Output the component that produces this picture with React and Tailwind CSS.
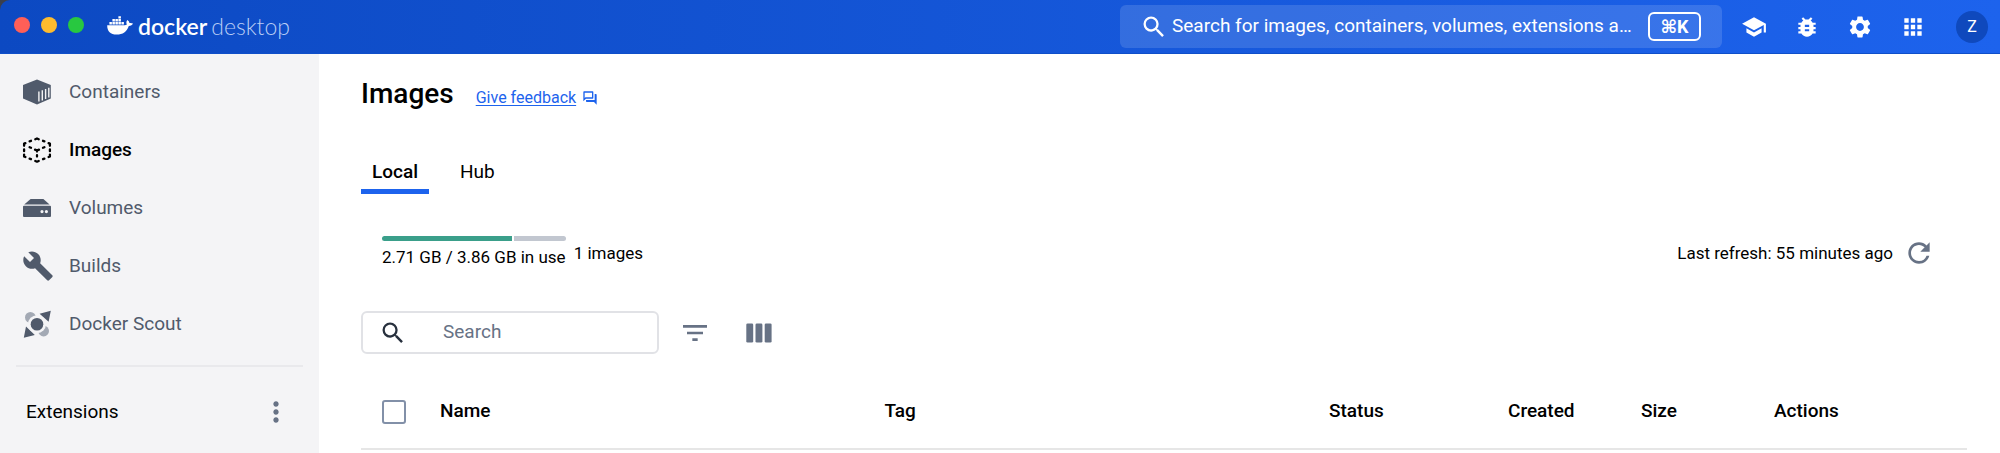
import React from "react";
import {
  MdApps,
  MdBugReport,
  MdBuild,
  MdFilterList,
  MdMoreVert,
  MdOutlineForum,
  MdRefresh,
  MdSchool,
  MdSearch,
  MdSettings,
} from "react-icons/md";

function WhaleIcon() {
  return (
    <svg viewBox="0 0 26 19" className="h-[19px] w-[26px]" fill="currentColor" aria-hidden="true">
      <path d="M0.2 9.2H17.6C18.5 9.2 19.3 9 19.9 8.6C19.1 7.2 19.2 5.4 20.4 4.1C21.6 4.9 22.3 5.9 22.4 7C23.6 6.8 25 6.9 26 7.6C25.4 9.2 23.8 9.9 21.8 9.9C19.8 15.4 15.9 18.6 9.6 18.6C3.6 18.6 0.1 15.4 0.2 9.2Z" />
      <path d="M2.4 6.1h2.5v2.5H2.4zM5.4 6.1h2.5v2.5H5.4zM8.4 6.1h2.5v2.5H8.4zM11.4 6.1h2.5v2.5h-2.5zM14.4 6.1h2.5v2.5h-2.5zM5.4 3.1h2.5v2.5H5.4zM8.4 3.1h2.5v2.5H8.4zM11.4 3.1h2.5v2.5h-2.5zM11.4 0.2h2.5v2.4h-2.5z" />
    </svg>
  );
}

function ContainersIcon() {
  return (
    <svg viewBox="0 0 30 26" className="h-[26px] w-[30px]" aria-hidden="true">
      <path d="M15 0.5L28.8 6V19.6L15 25.5L1 19.6V6Z" fill="currentColor" />
      <path
        d="M16.9 12.4V22.6M20.3 11.2V21.4M23.6 10V20M26.8 8.8V18.6"
        stroke="#f4f4f6"
        strokeWidth="1.4"
      />
    </svg>
  );
}

function ImagesIcon() {
  return (
    <svg
      viewBox="0 0 30 26"
      className="h-[26px] w-[30px]"
      fill="none"
      stroke="currentColor"
      strokeWidth="2.3"
      strokeLinecap="round"
      strokeLinejoin="round"
      aria-hidden="true"
    >
      <path d="M13.3 2.2L15 1.5L16.7 2.2M7.6 4.3L9 3.8M21 3.8L22.4 4.3" />
      <path d="M2.1 8.8V6.6L3.4 6.1M26.6 6.1L27.9 6.6V8.8M2.1 12.4V14.2M27.9 12.4V14.2" />
      <path d="M2.1 17.6V19.4L3.4 20M26.6 20L27.9 19.4V17.6M7.6 21.7L9 22.2M21 22.2L22.4 21.7M13.3 24L15 24.7L16.7 24" />
      <path d="M7.6 10.2L9 10.8M21 10.8L22.4 10.2M13 12.6L15 13.5L17 12.6M15 13.5V14.6M15 18.2V19.6" />
    </svg>
  );
}

function VolumesIcon() {
  return (
    <svg viewBox="0 0 30 20" className="h-[20px] w-[30px]" fill="currentColor" aria-hidden="true">
      <path d="M8.6 1H21.4L27.6 6.6H2.2Z" />
      <path
        fillRule="evenodd"
        d="M2 7.8H28A1 1 0 0 1 29 8.8V18A1 1 0 0 1 28 19H2A1 1 0 0 1 1 18V8.8A1 1 0 0 1 2 7.8ZM20 12A1.6 1.6 0 1 0 20 15.2A1.6 1.6 0 1 0 20 12ZM24.4 12A1.6 1.6 0 1 0 24.4 15.2A1.6 1.6 0 1 0 24.4 12Z"
      />
    </svg>
  );
}

function ScoutIcon() {
  return (
    <svg viewBox="0 0 30 30" className="size-[30px]" aria-hidden="true">
      <g fill="#a3a9b4">
        <circle cx="8.4" cy="8.4" r="5.4" />
        <circle cx="21.6" cy="22" r="5.4" />
      </g>
      <path
        d="M28.8 1.8L26.6 12.8L17.6 4.8ZM1.8 28.8L4 17.6L12.8 26Z"
        fill="currentColor"
      />
      <circle cx="15" cy="15.2" r="9" fill="#f4f4f6" />
      <circle cx="15" cy="15.2" r="6.3" fill="currentColor" />
    </svg>
  );
}

function ColumnsIcon() {
  return (
    <svg viewBox="0 0 26 20" className="h-[20px] w-[26px]" fill="currentColor" aria-hidden="true">
      <rect x="0.3" y="0.5" width="6.9" height="19" rx="1.3" />
      <rect x="9.5" y="0.5" width="6.9" height="19" rx="1.3" />
      <rect x="18.7" y="0.5" width="6.9" height="19" rx="1.3" />
    </svg>
  );
}

const navItems = [
  { label: "Containers", icon: <ContainersIcon /> },
  { label: "Images", icon: <ImagesIcon />, active: true },
  { label: "Volumes", icon: <VolumesIcon /> },
  { label: "Builds", icon: <MdBuild className="size-8 shrink-0" /> },
  { label: "Docker Scout", icon: <ScoutIcon /> },
];

const headerActions = [
  { label: "Learning center", icon: <MdSchool /> },
  { label: "Troubleshoot", icon: <MdBugReport /> },
  { label: "Settings", icon: <MdSettings /> },
  { label: "Apps", icon: <MdApps /> },
];

function Header() {
  return (
    <div className="bg-[#3a3f4c]">
      <header className="flex h-[54px] items-center justify-between rounded-tl-[10px] border-b border-[#0f4fc9] bg-linear-to-r from-[#0c49c2] to-[#1d63ed] pr-3 pl-[14px] text-white">
        <div className="flex items-center">
          <div className="flex gap-[11px] pb-1">
            <button type="button" aria-label="Close" className="size-4 rounded-full bg-[#ff5f57]" />
            <button type="button" aria-label="Minimize" className="size-4 rounded-full bg-[#febc2e]" />
            <button type="button" aria-label="Zoom" className="size-4 rounded-full bg-[#28c840]" />
          </div>
          <a href="#home" className="ml-[23px] flex items-center gap-[5px] pb-[2px]">
            <WhaleIcon />
            <span className="flex gap-1 font-[Lato,sans-serif] text-[23px] leading-7">
              <span className="font-semibold">docker</span>
              <span className="font-light text-[#b9cdf5]">desktop</span>
            </span>
          </a>
        </div>
        <div className="flex items-center">
          <button
            type="button"
            className="flex h-[43px] w-[602px] items-center rounded-md bg-white/13 pr-[21px] pl-5 text-left"
          >
            <MdSearch className="mr-1 size-7 shrink-0" />
            <span className="grow truncate text-[19px]">
              Search for images, containers, volumes, extensions a…
            </span>
            <kbd className="flex h-[29px] w-[53px] shrink-0 items-center justify-center rounded-md border-2 border-white font-[Roboto,'DejaVu_Sans',sans-serif] text-[18px] font-bold">
              ⌘K
            </kbd>
          </button>
          <div className="ml-[19px] flex gap-[27px]">
            {headerActions.map((action) => (
              <button key={action.label} type="button" aria-label={action.label} className="text-[26px]">
                {action.icon}
              </button>
            ))}
          </div>
          <button
            type="button"
            className="ml-[30px] size-8 rounded-full bg-[#0f49bd] text-[16px] text-white"
          >
            Z
          </button>
        </div>
      </header>
    </div>
  );
}

function Sidebar() {
  return (
    <aside className="w-[319px] shrink-0 bg-[#f4f4f6] px-4">
      <nav className="pt-[9px] pb-3">
        {navItems.map((item) => (
          <a
            key={item.label}
            href={"#" + item.label}
            className={
              item.active
                ? "flex h-[58px] items-center font-medium text-black"
                : "flex h-[58px] items-center text-[#505a6b]"
            }
          >
            <span className="flex w-[53px] shrink-0 items-center pl-[6px]">{item.icon}</span>
            <span className="text-[19px]">{item.label}</span>
          </a>
        ))}
      </nav>
      <hr className="border-t-2 border-[#e9e9ec]" />
      <div className="flex h-[90px] items-center justify-between pr-[11px] pl-[10px]">
        <span className="text-[19px]">Extensions</span>
        <button type="button" aria-label="Extensions menu" className="text-[#677285]">
          <MdMoreVert className="size-8" />
        </button>
      </div>
    </aside>
  );
}

function Usage() {
  return (
    <div className="flex items-center justify-between pr-8 pl-[21px] text-[17px] leading-6">
      <div className="flex items-center gap-2">
        <div>
          <div className="flex h-[5px] gap-[2px]">
            <div className="grow-5 basis-0 rounded-l-full bg-[#3a9f8a]" />
            <div className="grow-2 basis-0 rounded-r-full bg-[#c2c7d0]" />
          </div>
          <p className="mt-1">2.71 GB / 3.86 GB in use</p>
        </div>
        <p>1 images</p>
      </div>
      <div className="flex items-center gap-[10px]">
        <span>Last refresh: 55 minutes ago</span>
        <button type="button" aria-label="Refresh" className="text-[#677285]">
          <MdRefresh className="size-8" />
        </button>
      </div>
    </div>
  );
}

function Toolbar() {
  return (
    <div className="flex items-center">
      <label className="flex h-[43px] w-[298px] items-center rounded-md border-2 border-[#e1e2e6] pl-4">
        <MdSearch className="size-7 shrink-0 text-[#27303d]" />
        <input
          type="search"
          aria-label="Search images"
          placeholder="Search"
          className="ml-9 w-full min-w-0 bg-transparent text-[19px] outline-none placeholder:text-[#677285]"
        />
      </label>
      <button type="button" aria-label="Filter" className="ml-5 text-[#677285]">
        <MdFilterList className="size-8" />
      </button>
      <button type="button" aria-label="Columns" className="ml-[35px] text-[#677285]">
        <ColumnsIcon />
      </button>
    </div>
  );
}

function ImagesTable() {
  return (
    <table className="w-full table-fixed text-left text-[19px]">
      <thead>
        <tr className="h-[74px] border-b-2 border-[#e6e6e6] [&>th]:font-medium">
          <th scope="col" className="w-[79px] pl-[21px]">
            <input
              type="checkbox"
              aria-label="Select all images"
              className="block size-6 appearance-none rounded-[3px] border-2 border-[#8290a8] bg-white"
            />
          </th>
          <th scope="col">Name</th>
          <th scope="col">Tag</th>
          <th scope="col" className="w-[179px]">Status</th>
          <th scope="col" className="w-[133px]">Created</th>
          <th scope="col" className="w-[133px]">Size</th>
          <th scope="col" className="w-[193px]">Actions</th>
        </tr>
      </thead>
    </table>
  );
}

export default function App() {
  return (
    <div className="flex min-h-screen flex-col bg-white font-[Roboto,sans-serif] text-black">
      <Header />
      <div className="flex grow">
        <Sidebar />
        <main className="min-w-0 grow pt-5 pr-[33px] pl-[42px]">
          <div className="flex items-baseline gap-[22px]">
            <h1 className="text-[28px] leading-10 font-medium">Images</h1>
            <a href="#feedback" className="flex items-center gap-[6px] text-[16px] text-[#1d63ed]">
              <span className="underline underline-offset-2">Give feedback</span>
              <MdOutlineForum className="size-4" />
            </a>
          </div>
          <div role="tablist" className="mt-9 flex gap-5 text-[19px]">
            <button
              type="button"
              role="tab"
              aria-selected="true"
              className="h-11 border-b-5 border-[#1d63ed] px-[11px] pt-[6px] font-medium"
            >
              Local
            </button>
            <button
              type="button"
              role="tab"
              aria-selected="false"
              className="h-11 border-b-5 border-transparent px-[11px] pt-[6px]"
            >
              Hub
            </button>
          </div>
          <div className="mt-[42px]">
            <Usage />
          </div>
          <div className="mt-[42px]">
            <Toolbar />
          </div>
          <div className="mt-[21px]">
            <ImagesTable />
          </div>
        </main>
      </div>
    </div>
  );
}
